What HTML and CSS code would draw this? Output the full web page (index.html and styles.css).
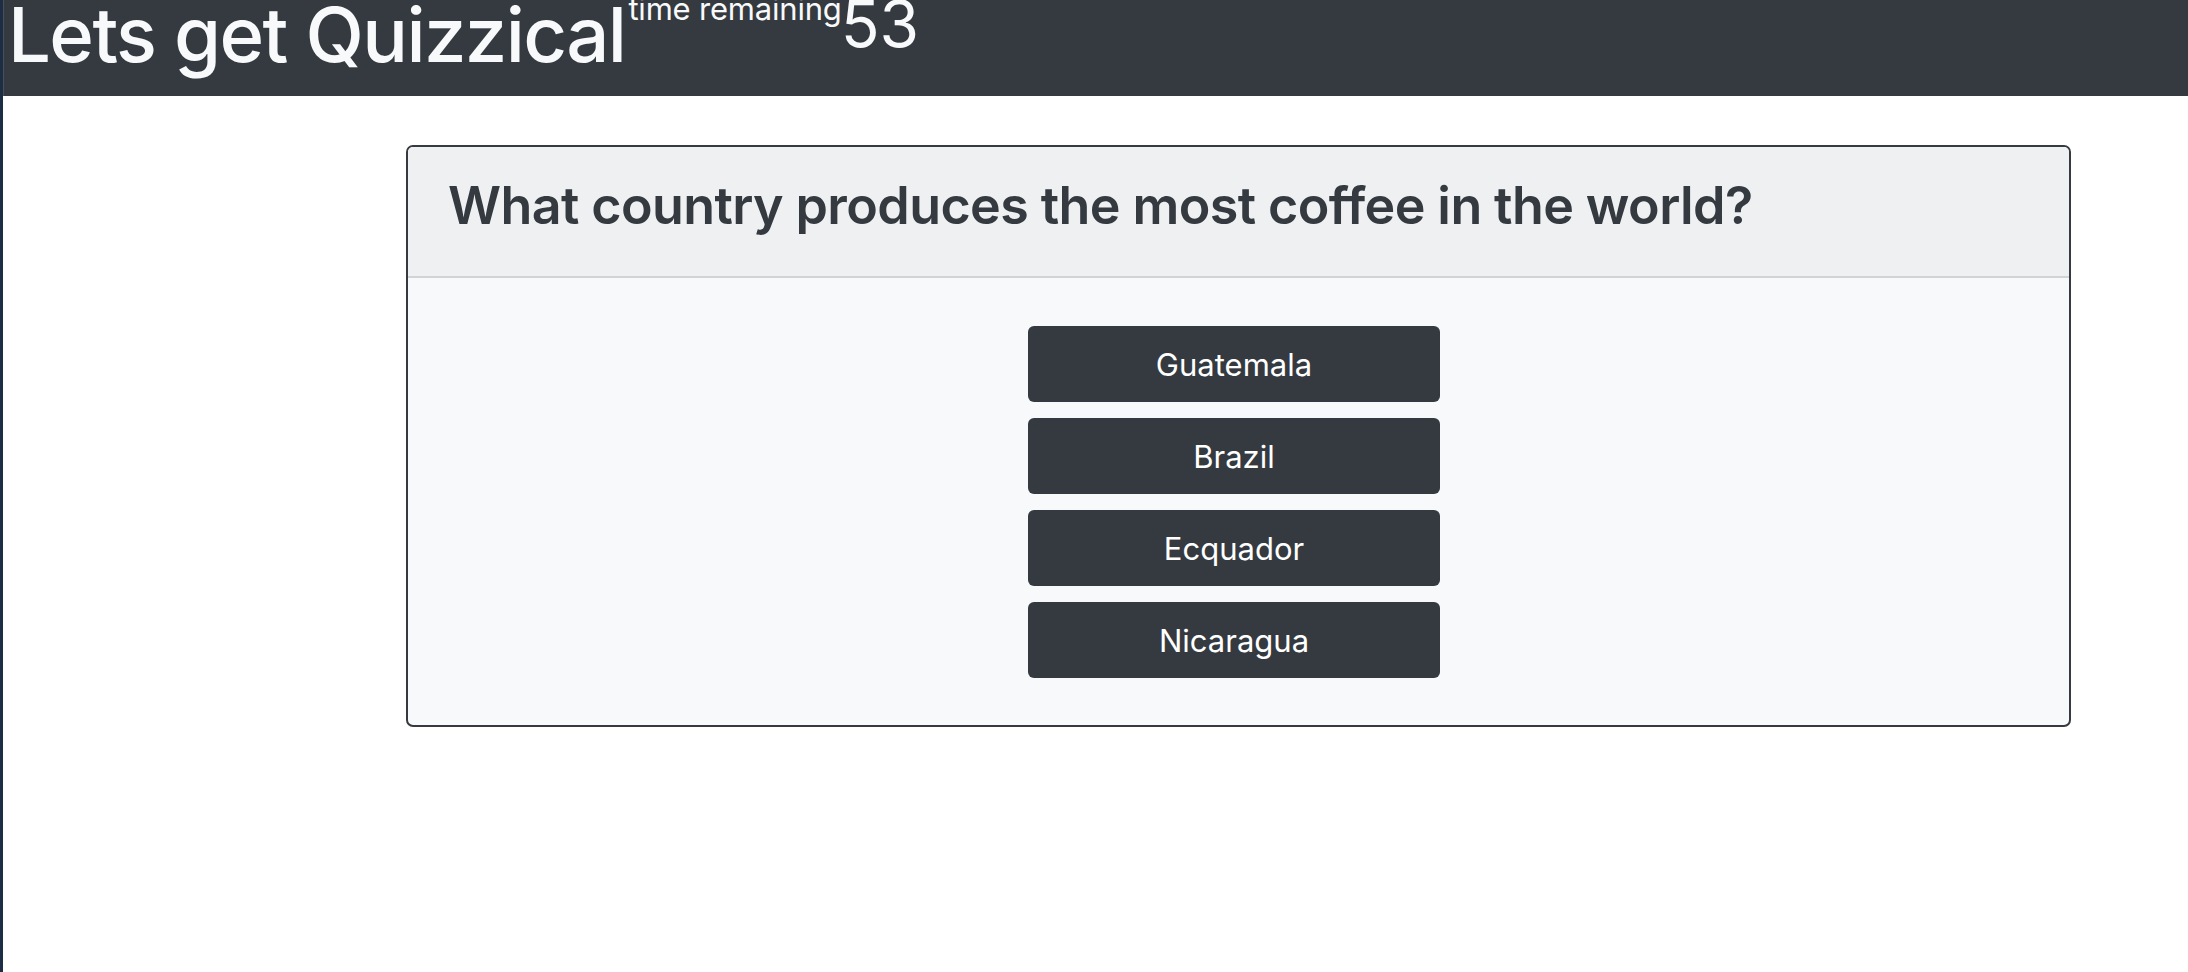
FILE: index.html
```html
<!DOCTYPE html>
<html lang="en">
<head>
<meta charset="utf-8">
<title>Lets get Quizzical</title>
<link rel="stylesheet" href="styles.css">
</head>
<body>
<div class="page">
  <header class="navbar">
    <h1 class="title">Lets get Quizzical</h1>
    <span class="timer-label">time remaining</span>
    <span class="timer-count">53</span>
  </header>
  <main class="main">
    <section class="card">
      <div class="card-header">
        <h2 class="question">What country produces the most coffee in the world?</h2>
      </div>
      <div class="card-body">
        <button class="answer">Guatemala</button>
        <button class="answer">Brazil</button>
        <button class="answer">Ecquador</button>
        <button class="answer">Nicaragua</button>
      </div>
    </section>
  </main>
</div>
</body>
</html>
```

FILE: styles.css
```css
html, body {
  margin: 0;
  padding: 0;
  height: 100%;
}
body {
  background: #ffffff;
  font-family: "Inter", "Liberation Sans", sans-serif;
  border-left: 3px solid #1d2d44;
  box-sizing: border-box;
}
.page {
  min-height: 100%;
}
.navbar {
  display: flex;
  align-items: flex-start;
  height: 96px;
  background: #343a40;
  color: #f8f9fa;
  padding-left: 4px;
  border-left: 1px solid #4a5058;
}
.title {
  margin: 0;
  font-size: 76px;
  font-weight: 500;
  line-height: 68px;
  letter-spacing: -1.6px;
}
.timer-label {
  font-size: 31px;
  line-height: 18px;
  margin-left: 3px;
  letter-spacing: -0.2px;
}
.timer-count {
  font-size: 64px;
  line-height: 48px;
  margin-left: -1px;
}
.main {
  padding: 49px 0 0 403px;
}
.card {
  width: 1665px;
  box-sizing: border-box;
  border: 2px solid #343a40;
  border-radius: 7px;
  background: #f8f9fa;
  overflow: hidden;
}
.card-header {
  height: 131px;
  box-sizing: border-box;
  background: #eff0f2;
  border-bottom: 2px solid #d2d3d5;
  padding: 0 40px;
}
.question {
  margin: 0;
  padding-top: 35px;
  font-size: 52px;
  line-height: 48px;
  font-weight: 600;
  color: #343a40;
  letter-spacing: -0.6px;
}
.card-body {
  display: flex;
  flex-direction: column;
  align-items: center;
  gap: 16px;
  padding: 48px 9px 47px 0;
}
.answer {
  width: 412px;
  height: 76px;
  border: none;
  border-radius: 6px;
  background: #343a40;
  color: #ffffff;
  font-family: "Inter", "Liberation Sans", sans-serif;
  font-size: 31px;
  font-weight: 400;
  padding: 0;
  cursor: pointer;
}
```
